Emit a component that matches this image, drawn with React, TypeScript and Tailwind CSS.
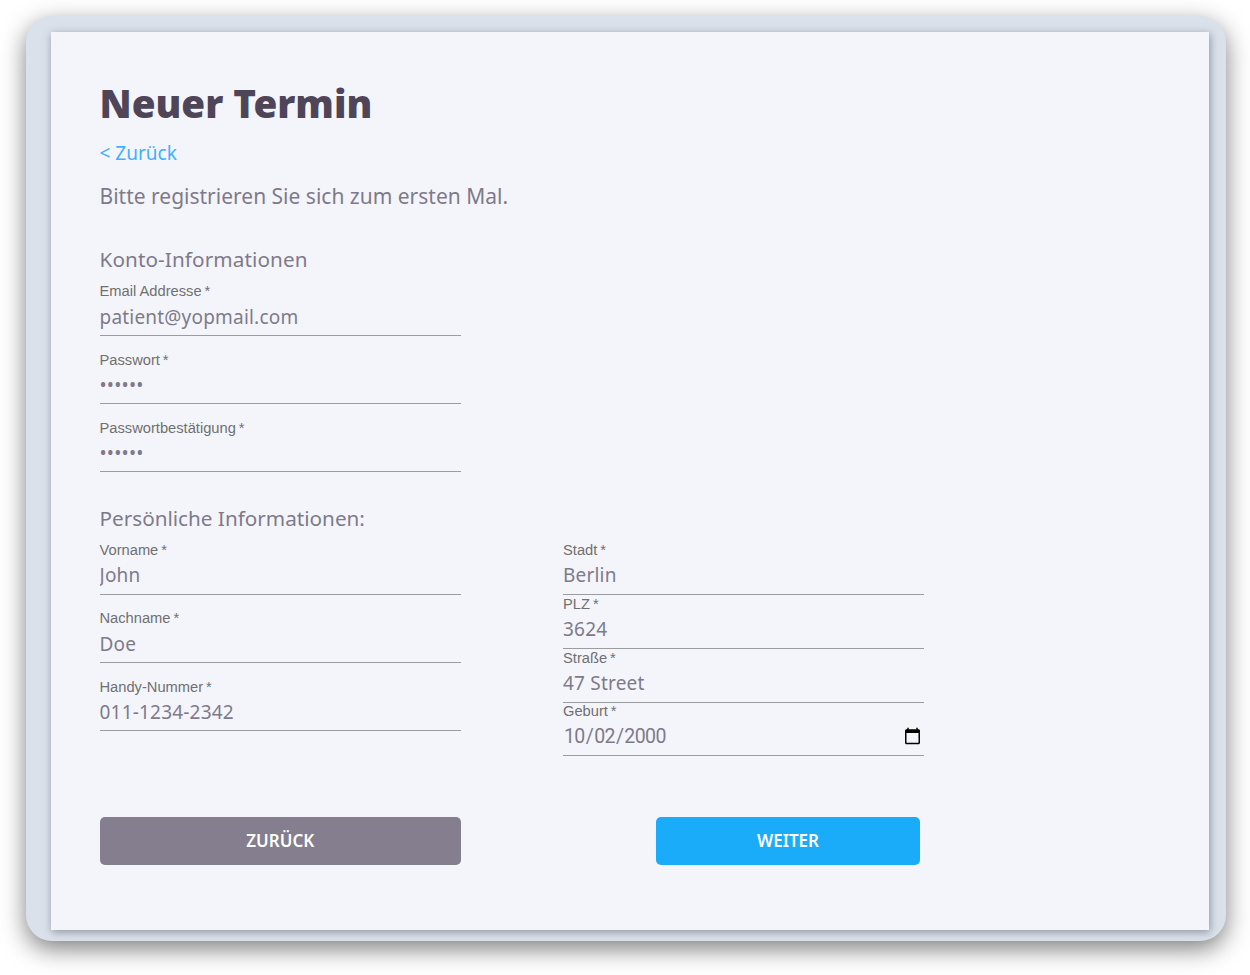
// App.tsx
type FieldProps = {
  label: string;
  value: string;
  type?: string;
  className?: string;
  labelDown?: boolean;
  valueUp?: boolean;
};

const Field = ({ label, value, type = 'text', className = '', labelDown, valueUp }: FieldProps) => {
  const isDate = type === 'date';

  let spacing = 'h-[37px] pt-[3px] pb-[4px]';
  if (labelDown) spacing = 'h-[36px] pt-[2px] pb-[4px]';
  if (valueUp) spacing = 'h-[37px] pt-[2px] pb-[5px]';
  if (isDate) spacing = 'h-[37px] pt-[3px] pb-[4px]';

  return (
    <label className={`block w-full ${className}`}>
      <span
        className={`block ${labelDown ? 'h-[18px] pt-[3px]' : 'h-[17px] pt-[2px]'} text-[14.7px] leading-[15px] text-[#707070] font-['Liberation_Sans',sans-serif]`}
      >
        {label}&thinsp;*
      </span>
      <input
        type={type}
        defaultValue={value}
        className={`block w-full ${spacing} bg-transparent border-b border-[#9c9c9c] outline-none text-[#7f7a8a] ${
          isDate
            ? "text-[19.5px] font-['Roboto',sans-serif] tracking-[-0.6px]"
            : "text-[19px] tracking-[0.2px] font-['Noto_Sans',sans-serif]"
        }`}
      />
    </label>
  );
};

export default function App() {
  return (
    <div className="w-[1250px] h-[975px] pt-4 pl-[26px] bg-white font-['Noto_Sans',sans-serif]">
      <div className="w-[1200px] h-[925px] pl-[25px] pr-[17px] pt-4 rounded-[26px] bg-[#dbe1ea] shadow-[0_8px_24px_rgba(0,0,0,0.5)]">
        <div className="h-[898px] pl-[48.5px] pt-[43px] bg-[#f4f5fb] shadow-[1px_2px_8px_rgba(60,70,90,0.5)]">
          <h1 className="h-[56px] text-[38.6px] leading-[56px] font-black text-[#4f4558]">Neuer Termin</h1>
          <a href="#" className="block mt-[8px] h-[28px] text-[19px] leading-[28px] text-[#42b0ff]">
            &lt; Zurück
          </a>
          <p className="mt-[15px] h-[29px] text-[21px] leading-[29px] text-[#7f7a8a]">
            Bitte registrieren Sie sich zum ersten Mal.
          </p>

          <h2 className="mt-[34px] h-[29px] text-[20.7px] leading-[29px] tracking-[0.1px] text-[#7f7a8a]">
            Konto-Informationen
          </h2>
          <div className="mt-[8px] w-[361.5px] flex flex-col gap-[14px]">
            <Field label="Email Addresse" value="patient@yopmail.com" />
            <Field label="Passwort" value="123456" type="password" labelDown />
            <Field label="Passwortbestätigung" value="123456" type="password" labelDown />
          </div>

          <h2 className="mt-[32px] h-[29px] text-[20.7px] leading-[29px] text-[#7f7a8a]">Persönliche Informationen:</h2>
          <div className="mt-[8px] flex gap-[102px]">
            <div className="w-[361.5px] flex flex-col gap-[14px]">
              <Field label="Vorname" value="John" valueUp />
              <Field label="Nachname" value="Doe" />
              <Field label="Handy-Nummer" value="011-1234-2342" labelDown />
            </div>
            <div className="w-[361px] flex flex-col">
              <Field label="Stadt" value="Berlin" valueUp />
              <Field label="PLZ" value="3624" valueUp />
              <Field label="Straße" value="47 Street" className="-mt-[0.4px]" />
              <Field label="Geburt" value="2000-10-02" type="date" className="-mt-[0.4px]" />
            </div>
          </div>

          <div className="mt-[61px] flex">
            <button className="w-[361.5px] h-[48px] rounded-[5px] bg-[#857e8e] text-white text-[17px] font-semibold">
              ZURÜCK
            </button>
            <button className="ml-[195px] w-[264px] h-[48px] rounded-[5px] bg-[#1aabf9] text-white text-[17px] font-semibold">
              WEITER
            </button>
          </div>
        </div>
      </div>
    </div>
  );
}
